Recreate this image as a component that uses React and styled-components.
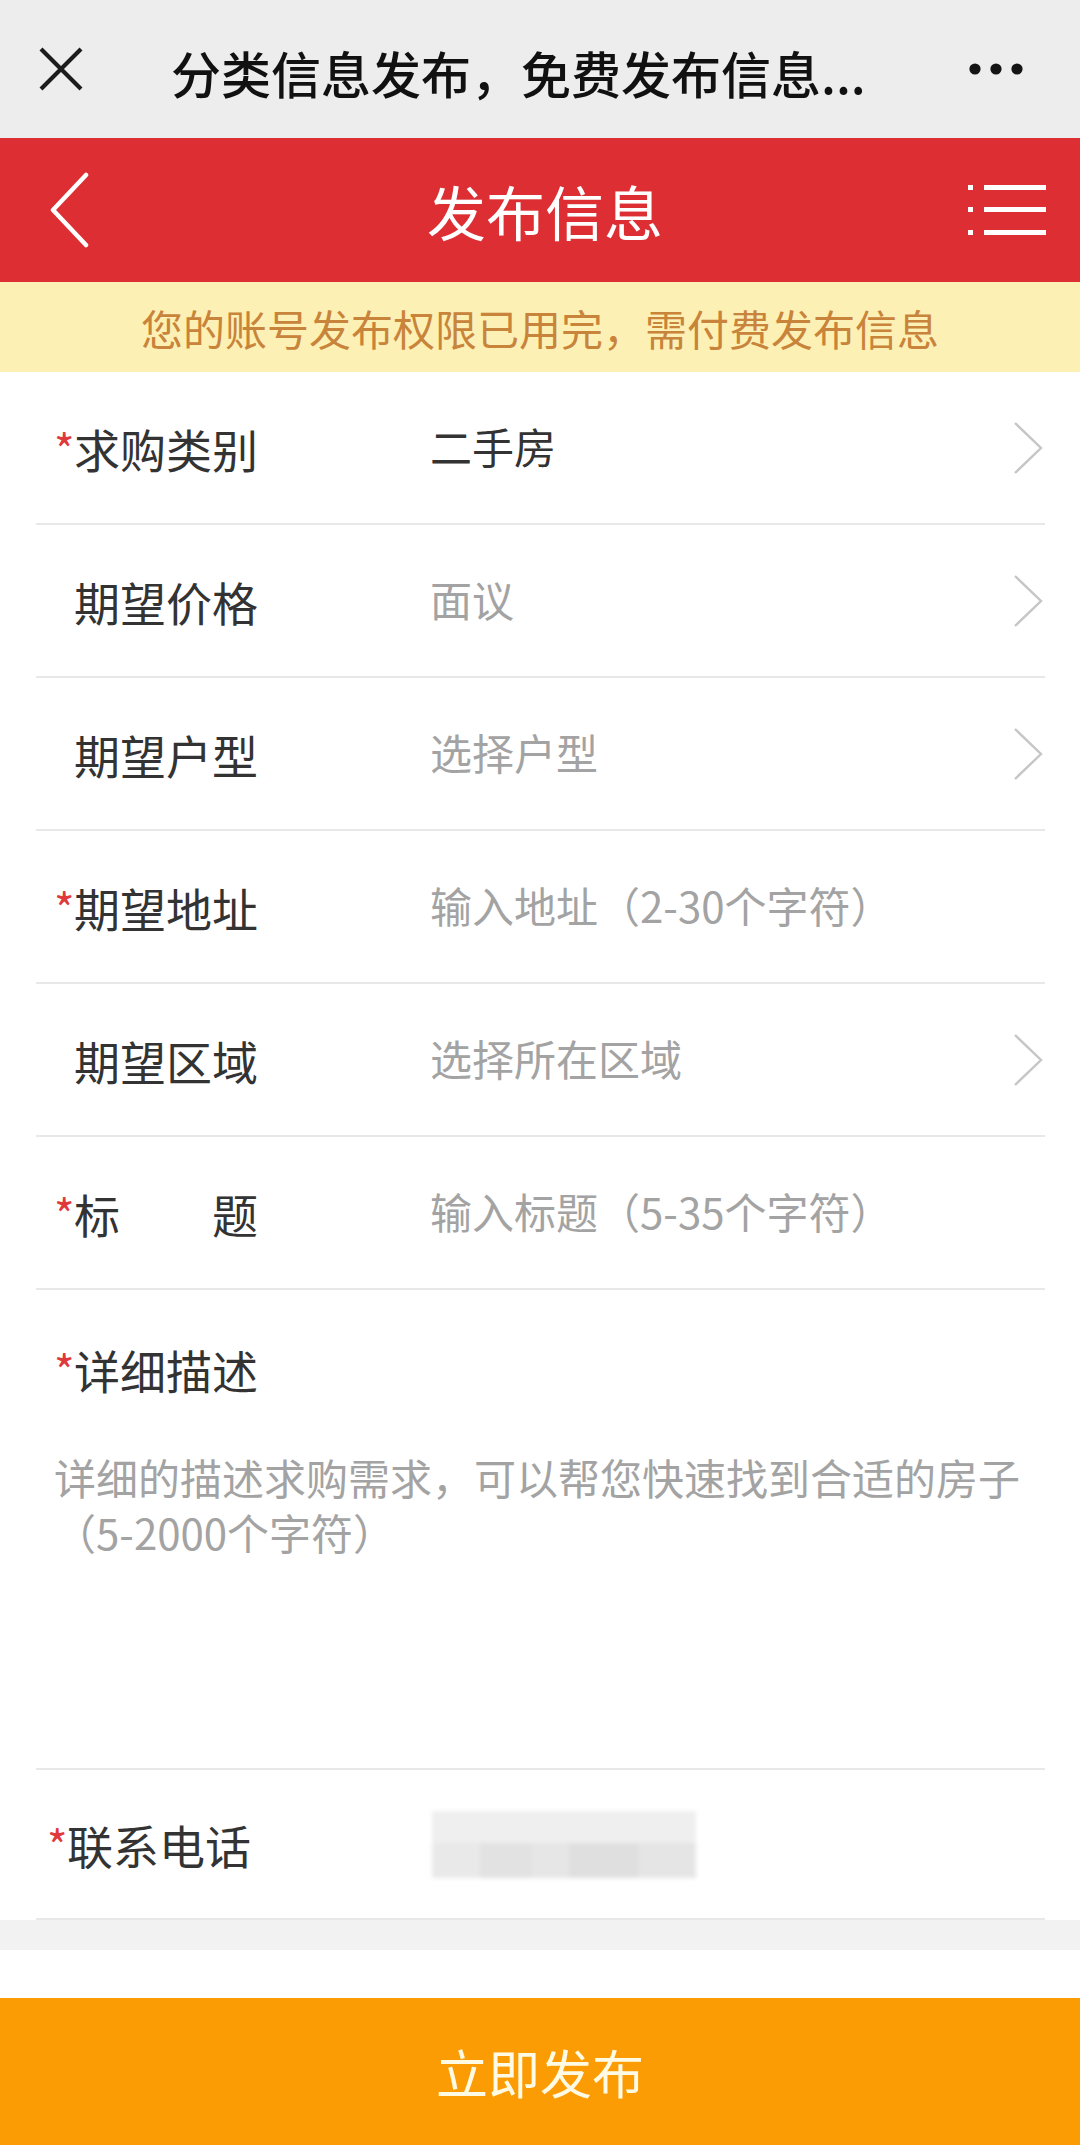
import React from 'react';
import styled, { createGlobalStyle } from 'styled-components';

const GlobalStyle = createGlobalStyle`
  body {
    margin: 0;
    background: #fff;
    font-family: "Noto Sans CJK SC", "Noto Sans", sans-serif;
  }
`;

const Page = styled.div`
  width: 1080px;
  min-height: 2145px;
  display: flex;
  flex-direction: column;
  background: #fff;
`;

const WechatBar = styled.div`
  height: 138px;
  background: #ededed;
  display: flex;
  align-items: center;
  padding: 0 57px 0 39px;
  box-sizing: border-box;
`;

const WechatTitle = styled.div`
  flex: 1;
  margin-left: 88px;
  margin-top: 6px;
  font-size: 50px;
  font-weight: 500;
  color: #111;
  white-space: nowrap;
`;

const Header = styled.div`
  height: 144px;
  background: #dd2e33;
  display: flex;
  align-items: center;
  padding: 0 34px 0 50px;
  box-sizing: border-box;
`;

const HeaderTitle = styled.div`
  flex: 1;
  text-align: center;
  padding-left: 32px;
  font-size: 59px;
  color: #fff;
`;

const Notice = styled.div`
  height: 90px;
  background: #fdf0b4;
  color: #c8843a;
  font-size: 42px;
  display: flex;
  align-items: center;
  justify-content: center;
`;

const Form = styled.div`
  margin: 0 35px 0 36px;
  display: flex;
  flex-direction: column;
`;

const Row = styled.div`
  height: ${p => p.$height || 153}px;
  box-sizing: border-box;
  border-bottom: 2px solid #e8e8e8;
  display: flex;
  align-items: center;
  padding: 0 2px 0 ${p => p.$inset || 18}px;
`;

const Label = styled.div`
  width: ${p => p.$width || 376}px;
  display: flex;
  align-items: flex-start;
  font-size: 46px;
  line-height: 50px;
  color: #333;
  white-space: pre;
`;

const Mark = styled.span`
  width: 20px;
  flex: none;
  margin-top: 3px;
  font-size: 44px;
  line-height: 44px;
  color: #e0393c;
  visibility: ${p => (p.$on ? 'visible' : 'hidden')};
`;

const Value = styled.div`
  flex: 1;
  font-size: 42px;
  color: ${p => (p.$filled ? '#333' : '#a3a3a3')};
  margin-top: -4px;
`;

const Describe = styled.div`
  height: 480px;
  box-sizing: border-box;
  border-bottom: 2px solid #e8e8e8;
  padding: 54px 0 0 18px;
  display: flex;
  flex-direction: column;
`;

const Hint = styled.div`
  margin-top: 55px;
  font-size: 42px;
  line-height: 55px;
  color: #a3a3a3;
`;

const Blurred = styled.div`
  width: 264px;
  height: 67px;
  margin-left: 2px;
  background:
    linear-gradient(90deg, #e9e9e9 0 18%, #e2e2e2 18% 38%, #e6e6e6 38% 52%, #dfdfdf 52% 78%, #e5e5e5 78% 100%);
  filter: blur(2px);
  box-shadow: 0 33px 0 -1px #efefef inset;
`;

const Gap = styled.div`
  height: 30px;
  background: #f2f2f2;
`;

const Spacer = styled.div`
  height: 48px;
  background: #fff;
`;

const Submit = styled.button`
  height: 147px;
  border: 0;
  background: #fc9c04;
  color: #fffae4;
  font-family: inherit;
  font-size: 52px;
  display: flex;
  align-items: center;
  justify-content: center;
  padding: 0;
`;

const CloseIcon = () => (
  <svg width="44" height="44" viewBox="0 0 44 44">
    <path d="M2 2 L42 42 M42 2 L2 42" stroke="#1c1c1c" strokeWidth="4.2" fill="none" />
  </svg>
);

const MoreIcon = () => (
  <svg width="54" height="14" viewBox="0 0 54 14">
    <circle cx="6" cy="7" r="5.6" fill="#141414" />
    <circle cx="27" cy="7" r="5.6" fill="#141414" />
    <circle cx="48" cy="7" r="5.6" fill="#141414" />
  </svg>
);

const BackIcon = () => (
  <svg width="40" height="76" viewBox="0 0 40 76">
    <polyline points="36,3 3,38 36,73" stroke="#fff" strokeWidth="4.5" fill="none" strokeLinecap="round" strokeLinejoin="round" />
  </svg>
);

const MenuIcon = () => (
  <svg width="78" height="54" viewBox="0 0 78 54">
    {[2, 24, 47].map(y => (
      <g key={y}>
        <rect x="0" y={y} width="5" height="5" fill="#fff" />
        <rect x="16" y={y} width="62" height="5" fill="#fff" />
      </g>
    ))}
  </svg>
);

const Chevron = () => (
  <svg width="30" height="54" viewBox="0 0 30 54">
    <polyline points="2,2 28,27 2,52" stroke="#c6c6c6" strokeWidth="2.4" fill="none" />
  </svg>
);

const fields = [
  { label: '求购类别', value: '二手房', required: true, filled: true, arrow: true },
  { label: '期望价格', value: '面议', arrow: true },
  { label: '期望户型', value: '选择户型', arrow: true },
  { label: '期望地址', value: '输入地址（2-30个字符）', required: true },
  { label: '期望区域', value: '选择所在区域', arrow: true },
  { label: '标　　题', value: '输入标题（5-35个字符）', required: true },
];

const App = () => (
  <Page>
    <GlobalStyle />
    <WechatBar>
      <CloseIcon />
      <WechatTitle>分类信息发布，免费发布信息...</WechatTitle>
      <MoreIcon />
    </WechatBar>

    <Header>
      <BackIcon />
      <HeaderTitle>发布信息</HeaderTitle>
      <MenuIcon />
    </Header>

    <Notice>您的账号发布权限已用完，需付费发布信息</Notice>

    <Form>
      {fields.map(f => (
        <Row key={f.label}>
          <Label>
            <Mark $on={f.required}>*</Mark>
            {f.label}
          </Label>
          <Value $filled={f.filled}>{f.value}</Value>
          {f.arrow && <Chevron />}
        </Row>
      ))}

      <Describe>
        <Label>
          <Mark $on>*</Mark>
          详细描述
        </Label>
        <Hint>详细的描述求购需求，可以帮您快速找到合适的房子（5-2000个字符）</Hint>
      </Describe>

      <Row $height={150} $inset={11}>
        <Label $width={383}>
          <Mark $on>*</Mark>
          联系电话
        </Label>
        <Blurred />
      </Row>
    </Form>

    <Gap />
    <Spacer />
    <Submit type="button">立即发布</Submit>
  </Page>
);

export default App;
